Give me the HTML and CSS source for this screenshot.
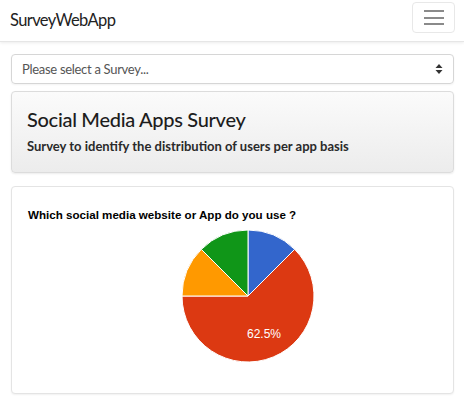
FILE: index.html
```html
<!DOCTYPE html>
<html>
<head>
<meta charset="utf-8">
<link rel="stylesheet" href="styles.css">
</head>
<body>
<nav class="navbar">
  <span class="brand">SurveyWebApp</span>
  <button class="toggler" aria-label="menu"><span></span><span></span><span></span></button>
</nav>
<main class="container">
  <div class="select">
    <span class="select-text">Please select a Survey...</span>
    <svg class="select-arrow" width="8" height="12" viewBox="0 0 8 12"><path d="M4 1 L7.5 5 H0.5 Z M4 11 L7.5 7 H0.5 Z" fill="#333"/></svg>
  </div>
  <section class="jumbo">
    <h1 class="jumbo-title">Social Media Apps Survey</h1>
    <p class="jumbo-sub">Survey to identify the distribution of users per app basis</p>
  </section>
  <section class="chart-card">
    <h2 class="chart-title">Which social media website or App do you use ?</h2>
    <div class="pie-wrap">
      <svg class="pie" width="134" height="134" viewBox="-1 -1 134 134">
        <g stroke="#fff" stroke-width="1">
          <path d="M66 66 L66 0 A66 66 0 0 1 112.67 19.33 Z" fill="#3366cc"/>
          <path d="M66 66 L112.67 19.33 A66 66 0 1 1 0 66 Z" fill="#dc3912"/>
          <path d="M66 66 L0 66 A66 66 0 0 1 19.33 19.33 Z" fill="#ff9900"/>
          <path d="M66 66 L19.33 19.33 A66 66 0 0 1 66 0 Z" fill="#109618"/>
        </g>
        <text x="65" y="108" class="pie-label">62.5%</text>
      </svg>
    </div>
  </section>
</main>
</body>
</html>
```
FILE: styles.css
```css
* { box-sizing: border-box; }
body {
  margin: 0;
  font-family: Lato, "Open Sans", sans-serif;
  color: #212529;
  background: #fff;
  width: 464px;
  height: 405px;
  overflow: hidden;
}
.navbar {
  height: 42px;
  display: flex;
  align-items: center;
  justify-content: space-between;
  padding: 0 9px 0 10px;
  border-bottom: 1px solid #e6e6e6;
  box-shadow: 0 1px 3px rgba(0,0,0,0.08);
}
.brand {
  font-size: 16.5px;
  letter-spacing: -0.6px;
  color: #222;
  margin-top: -2px;
}
.toggler {
  width: 43px;
  height: 31px;
  margin-top: -6px;
  border: 1px solid #e8e8e8;
  border-radius: 4px;
  background: #fff;
  display: flex;
  flex-direction: column;
  align-items: center;
  justify-content: center;
  gap: 4.5px;
  padding: 0;
}
.toggler span {
  display: block;
  width: 20px;
  height: 2px;
  background: #8a8a8a;
}
.container {
  padding: 12px 10px 0 11px;
}
.select {
  height: 30px;
  border: 1px solid #d6d6d6;
  border-radius: 4px;
  display: flex;
  align-items: center;
  justify-content: space-between;
  padding: 0 10px 0 10px;
  box-shadow: 0 1px 2px rgba(0,0,0,0.05);
}
.select-text {
  font-size: 13px;
  letter-spacing: -0.3px;
  color: #555;
}
.select-arrow { display: block; }
.jumbo {
  margin-top: 7px;
  height: 82px;
  border: 1px solid #dcdcdc;
  border-radius: 4px;
  background: linear-gradient(to bottom, #fbfbfb, #ececec);
  box-shadow: 0 1px 2px rgba(0,0,0,0.08);
  padding: 14px 15px 0 15px;
}
.jumbo-title {
  margin: 0;
  font-size: 20px;
  letter-spacing: -0.3px;
  font-weight: 500;
  color: #1d1d1d;
  line-height: 26px;
}
.jumbo-sub {
  margin: 5px 0 0 0;
  font-size: 13px;
  font-weight: 700;
  color: #2a2a2a;
  line-height: 18px;
}
.chart-card {
  margin-top: 13px;
  height: 208px;
  border: 1px solid #e4e4e4;
  border-radius: 4px;
  background: #fff;
  box-shadow: 0 1px 2px rgba(0,0,0,0.06);
  padding: 21px 16px 0 16px;
}
.chart-title {
  margin: 0;
  font-family: "Liberation Sans", Arial, sans-serif;
  font-weight: bold;
  font-size: 11.6px;
  line-height: 14px;
  color: #000;
}
.pie-wrap {
  display: flex;
  justify-content: center;
  margin-top: 7px;
  padding-left: 31px;
}
.pie { display: block; }
.pie-label {
  font-family: "Liberation Sans", Arial, sans-serif;
  font-size: 12px;
  fill: #fff;
}
```
